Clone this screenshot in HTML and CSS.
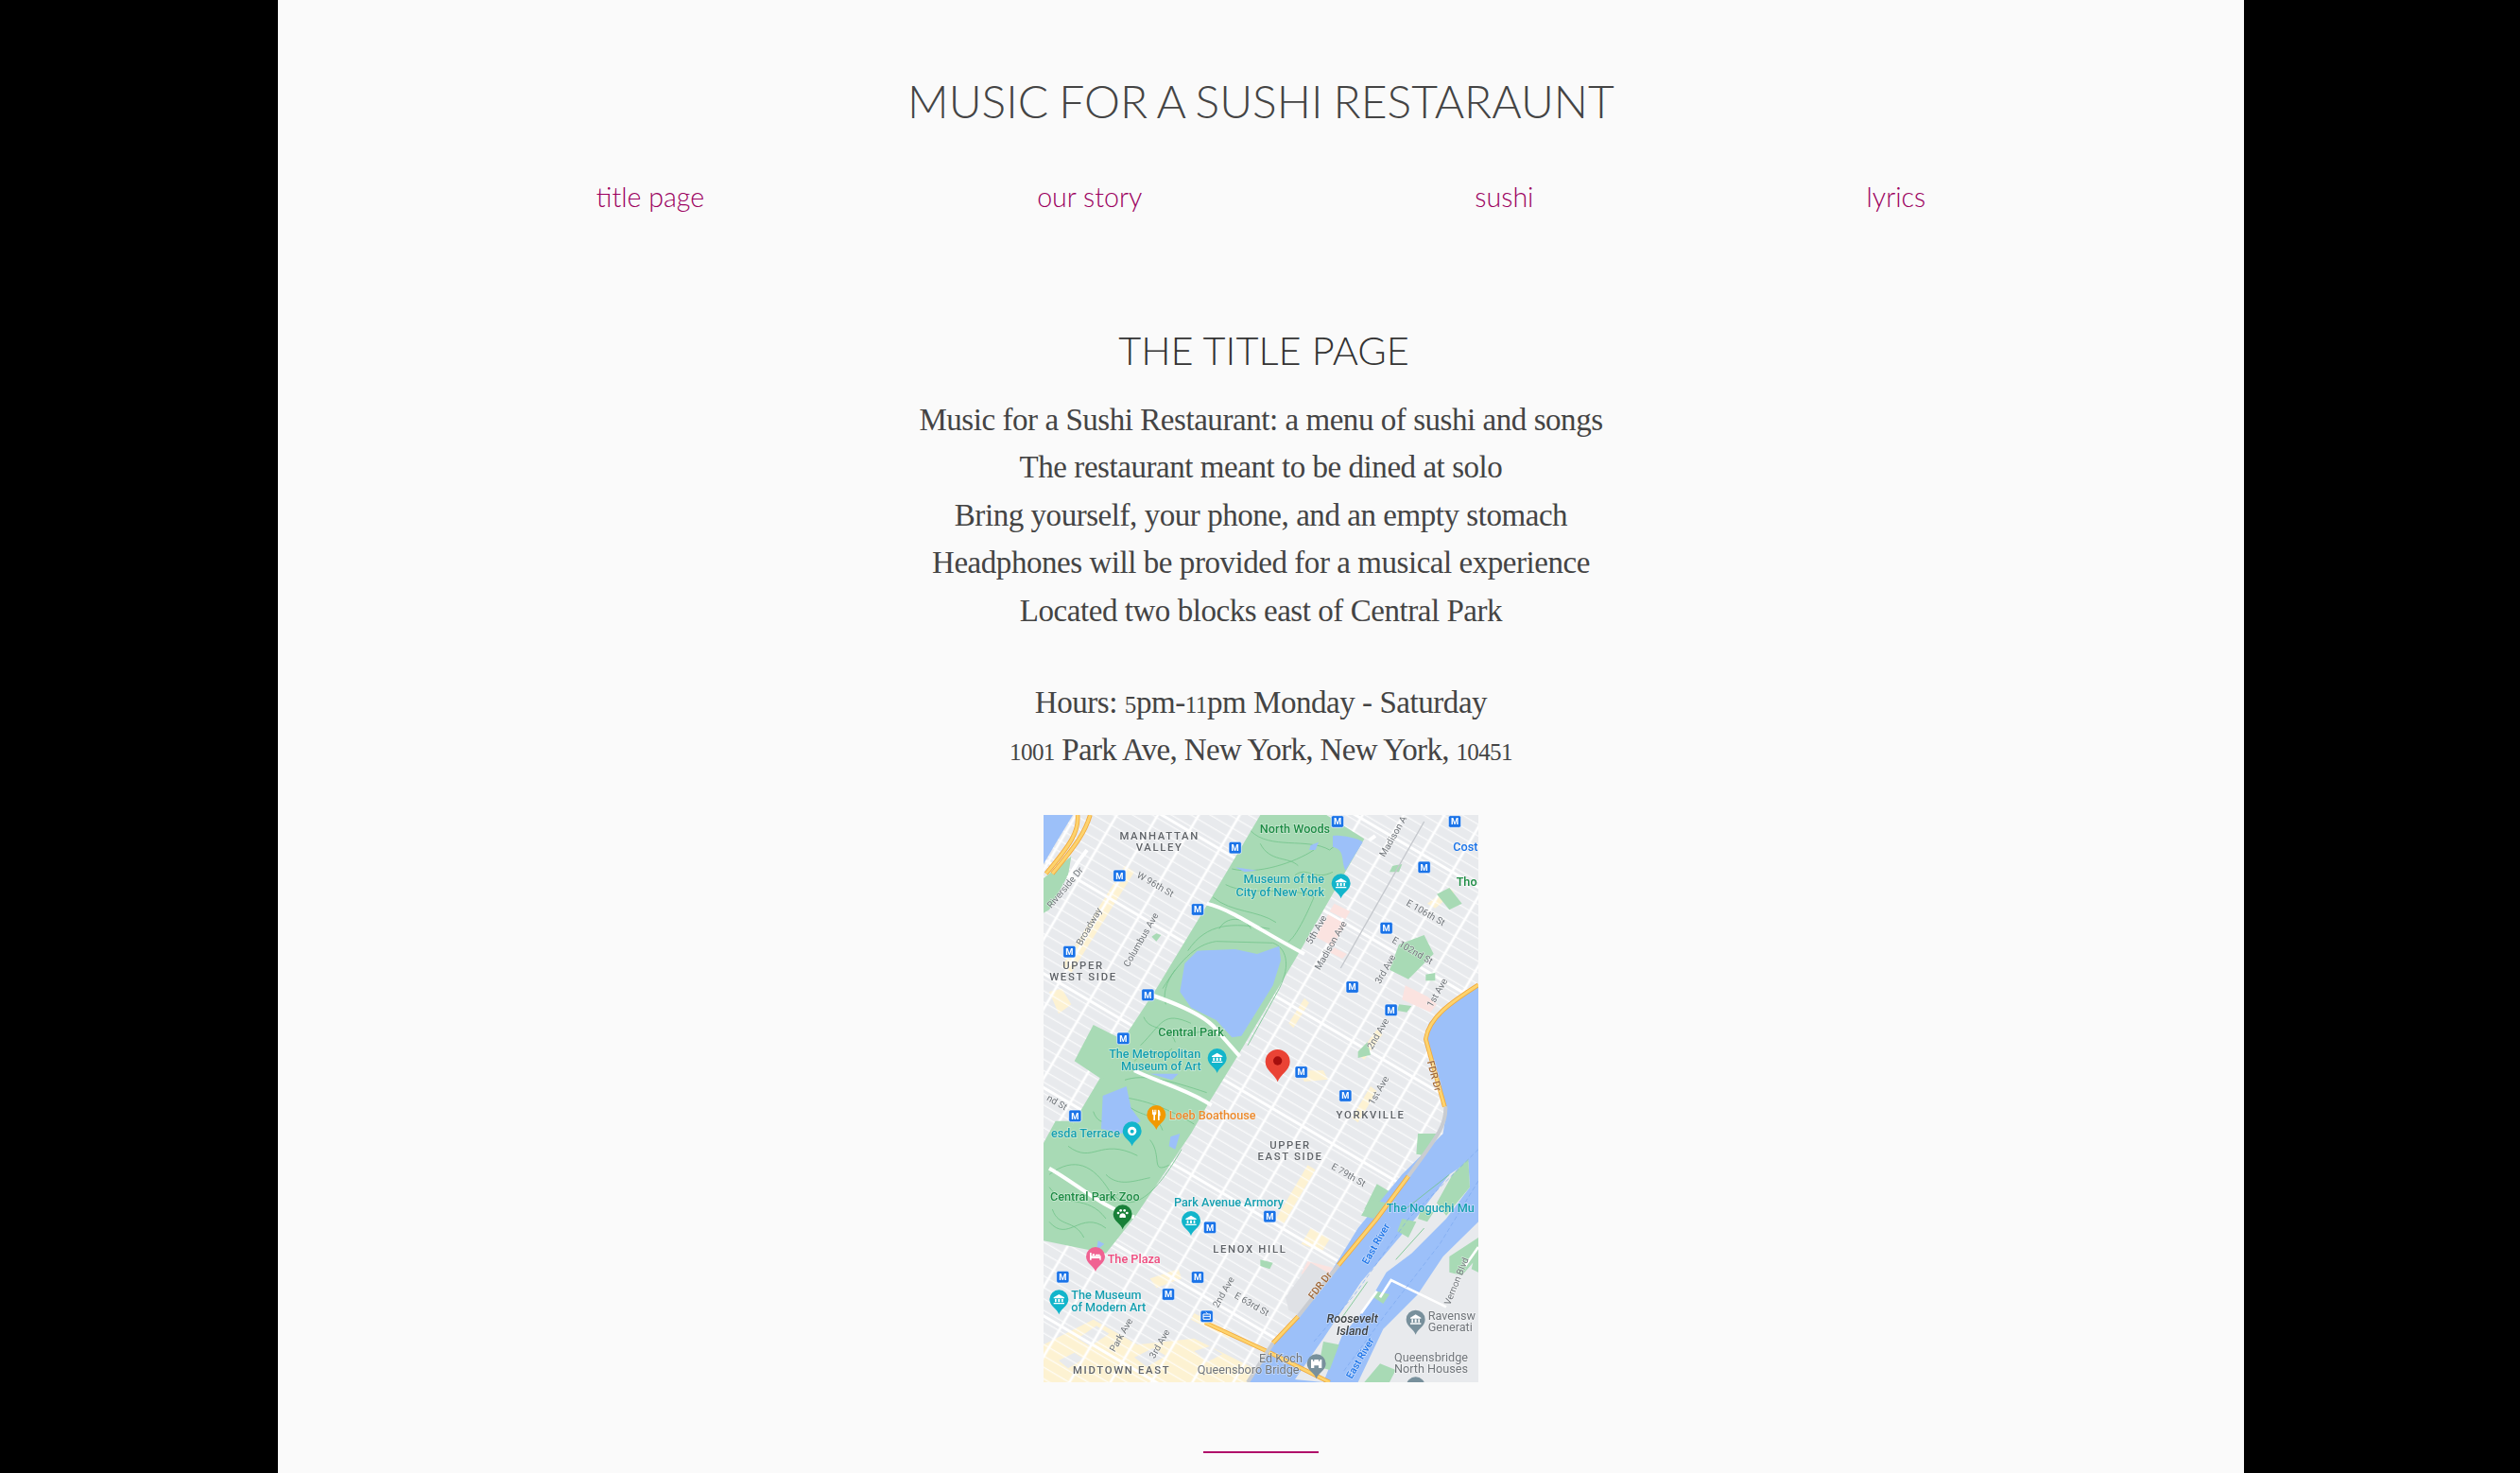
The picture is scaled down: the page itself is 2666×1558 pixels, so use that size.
FILE: index.html
```html
<!DOCTYPE html>
<html lang="en">
<head>
<meta charset="utf-8">
<title>Music for a Sushi Restaurant</title>
<link rel="stylesheet" href="styles.css">
</head>
<body>
<main class="page">
  <header class="masthead">
    <h1 class="site-title">MUSIC FOR A SUSHI RESTARAUNT</h1>
    <nav class="nav">
      <a class="nav-link" href="#">title page</a>
      <a class="nav-link" href="#">our story</a>
      <a class="nav-link" href="#">sushi</a>
      <a class="nav-link" href="#">lyrics</a>
    </nav>
  </header>
  <section class="content">
    <h2 class="section-title">THE TITLE PAGE</h2>
    <div class="copy">
      <p>Music for a Sushi Restaurant: a menu of sushi and songs</p>
      <p>The restaurant meant to be dined at solo</p>
      <p>Bring yourself, your phone, and an empty stomach</p>
      <p>Headphones will be provided for a musical experience</p>
      <p>Located two blocks east of Central Park</p>
    </div>
    <div class="copy copy-hours">
      <p>Hours: <span class="num">5</span>pm-<span class="num">11</span>pm Monday - Saturday</p>
      <p class="address"><span class="num">1001</span> Park Ave, New York, New York, <span class="num">10451</span></p>
    </div>
    <svg class="map" viewBox="42 39 1380 1800" role="img" aria-label="Map of the Upper East Side">
      <defs>
        <pattern id="streets" width="112" height="312" patternUnits="userSpaceOnUse" patternTransform="translate(570 310) rotate(30.5)">
          <path class="st-minor" d="M0 15.600H112M0 46.800H112M0 78H112M0 109.200H112M0 140.400H112M0 171.600H112M0 202.800H112M0 234H112M0 265.200H112M0 296.400H112"/>
          <path class="st-major" d="M0 156H112"/>
          <path class="st-ave" d="M56 0V312"/>
        </pattern>
        <path id="pin" d="M0 48C-5 30-30 22-30 0A30 30 0 0 1 30 0C30 22 5 30 0 48Z"/>
        <g id="museum" class="pin-icon">
          <path d="M-17-6 0-16 17-6V-3H-17Z"/>
          <path d="M-13-1H-8V9H-13ZM-3-1H3V9H-3ZM8-1H13V9H8ZM-17 11H17V15H-17Z"/>
        </g>
        <g id="metro">
          <rect class="m-box" x="-20" y="-19" width="40" height="38" rx="6"/>
          <text class="m-text" x="0" y="10">M</text>
        </g>
      </defs>

      <rect class="land" x="42" y="39" width="1380" height="1800"/>
      <path class="warm" d="M42 1720 200 1640 340 1720 520 1700 700 1790 740 1839H42Z"/>
      <path class="land" d="M150 1700 210 1660 250 1685 190 1725ZM330 1760 390 1730 430 1755 370 1790ZM520 1740 570 1725 610 1750 560 1775ZM90 1770 140 1745 170 1765 120 1795Z"/>
      <path class="warm" d="M100 520 300 200 330 220 130 540ZM60 600 100 590 130 640 90 670ZM780 1320 880 1150 905 1165 805 1335ZM1020 1000 1080 900 1100 915 1040 1015ZM1260 320 1330 270 1345 285 1285 335ZM380 1510 470 1480 480 1510 400 1540ZM520 1620 640 1680 630 1700 510 1640Z"/>
      <path class="warm" d="M820 700 870 620 885 635 835 715ZM1040 800 1100 720 1118 735 1060 815ZM850 850 930 850 945 878 870 885ZM860 1400 890 1350 950 1385 925 1425Z"/>
      <rect class="streets" x="42" y="39" width="1380" height="1800"/>

      <path class="pink" d="M965 320 1015 345 1000 370 950 345ZM945 355 1000 385 960 455 905 425ZM965 460 1005 480 990 495 950 475ZM1190 580 1260 615 1290 640 1270 665 1180 625ZM880 1455 960 1475 970 1520 900 1510 860 1495Z"/>
      <path class="shade" d="M810 1570 890 1460 960 1500 880 1640 820 1610Z"/>

      <path class="park" d="M730 39H940L1060 115 845 490 660 800 565 955 510 1050 335 1310 240 1430 42 1390V1210L140 1010 295 750 400 590 570 310Z"/>
      <path class="park" d="M200 705 300 755 230 880 140 820Z"/>
      <path class="park" d="M42 240 130 170 120 230 60 340 42 350Z"/>
      <path class="park" d="M80 1010 140 1010 60 1200 42 1210V1080Z"/>
      <path class="park" d="M1060 1290 1100 1210 1150 1240 1100 1310ZM1140 1390 1180 1370 1190 1440 1150 1460ZM1150 200 1180 195 1170 220 1140 220ZM1170 450 1250 420 1280 480 1200 560 1140 530ZM1255 545 1285 540 1285 565 1255 565ZM1040 790 1070 760 1080 800 1040 810ZM1170 640 1210 645 1195 665 1165 660ZM1290 290 1330 270 1370 320 1330 340ZM730 1450 770 1460 760 1480 730 1470ZM770 145 800 150 790 160 770 155ZM400 415 415 420 400 440 385 425Z"/>

      <path class="trail" d="M420 590C470 510 520 450 590 440L770 445C810 460 830 510 790 590L690 770M500 470C560 380 640 380 760 400M700 90C760 150 880 110 950 150L1000 110M640 210C720 230 840 190 900 150M620 260C700 300 820 260 900 300 880 350 840 430 820 440M580 300C640 350 720 340 780 380M440 720C500 760 540 700 620 740M350 770C420 700 420 660 510 700M300 880C360 860 440 880 560 920M260 930C350 940 420 960 520 1020M60 1180C140 1120 200 1150 250 1230 320 1320 400 1240 480 1100M120 1090C200 1150 220 1060 340 1120M60 1330C120 1400 160 1290 240 1350M60 1220C110 1290 180 1240 240 1320M460 530C430 570 420 610 430 640M780 500C760 560 740 610 700 690M600 400C620 360 680 360 700 400M730 130C760 190 820 170 850 200M840 230C880 200 900 250 960 220M300 950C340 1000 400 980 420 1040M380 1070C420 1120 380 1180 440 1150M130 1260C170 1220 240 1280 280 1240M240 1180C280 1220 330 1200 380 1190M70 1290C90 1350 140 1320 170 1380M360 680C380 730 440 700 460 760M330 820C370 780 420 810 450 780M200 980C220 1040 280 1010 290 960"/>

      <path class="water" d="M42 39H135L80 130 42 195ZM490 510 530 470 650 465 720 480 790 455 795 500 770 580 720 660 670 740 640 745 590 690 510 650 475 600ZM960 105C985 100 1050 115 1055 125L1000 215C985 180 1000 150 960 140ZM890 135 915 125 905 150 885 150ZM650 205 720 215 680 220ZM230 930 305 900 320 970 350 1010 290 1050 225 1035ZM380 860 470 860 450 880ZM445 1060 475 1050 460 1100 440 1090ZM215 1390 235 1400 210 1420Z"/>
      <path class="water" d="M1422 580 1330 635 1265 700 1250 760 1290 880 1322 970 1310 1050 1180 1180 1040 1350 960 1480 850 1630 760 1730 690 1839H1422Z"/>
      <path class="land" d="M1422 1330 1310 1440 1230 1560 1120 1670 1040 1839H1422Z"/>
      <path class="land" d="M1390 1140 1330 1180 1230 1310 1120 1440 1050 1520 990 1610 930 1700 840 1830 930 1839 990 1690 1060 1610 1130 1490 1210 1430 1320 1320 1395 1220Z"/>
      <path class="park" d="M1390 1130 1395 1220 1320 1310 1290 1270 1340 1180ZM1180 1320 1225 1330 1200 1380 1165 1360ZM1240 1290 1280 1300 1260 1330 1230 1320ZM930 1710 980 1720 950 1800 915 1790ZM1100 1550 1140 1560 1120 1590 1090 1570ZM1330 1440 1422 1380V1440L1370 1500 1330 1490ZM1060 1839 1110 1780 1160 1800 1140 1839ZM1230 1050 1290 1050 1250 1120 1225 1115ZM1080 1260 1130 1270 1090 1320 1050 1310ZM1410 1440 1422 1430 1422 1490 1400 1480Z"/>
      <path class="road" d="M1110 1570 1145 1515 1320 1600M1050 1620 1100 1550M1422 1410 1380 1470"/>
      <path class="trail" d="M1160 1450 1250 1350M1190 1290 1330 1180M985 1640 1070 1520"/>
      <path class="river-line" d="M1422 1100 1200 1320 1030 1560 900 1710M1422 1200 1300 1400 1130 1620 990 1810"/>

      <path class="road-wide" d="M560 320C640 340 720 400 870 480M390 612C470 640 560 680 590 720L665 805M330 850C400 885 500 910 575 960M60 1160C150 1210 220 1280 330 1315"/>
      <path class="road-wide" d="M180 150 150 190 120 240"/>
      <path class="road-casing" d="M150 39C155 90 130 130 50 225M190 39C175 90 150 130 70 225M1422 578C1340 630 1265 680 1255 750L1315 965M1200 1185 1100 1320 978 1468M850 1630 770 1715M555 1650 750 1740 950 1839"/>
      <path class="road-yellow" d="M150 39C155 90 130 130 50 225M190 39C175 90 150 130 70 225M1422 578C1340 630 1265 680 1255 750L1315 965M1200 1185 1100 1320 978 1468M850 1630 770 1715M555 1650 750 1740 950 1839"/>
      <path class="road-grey" d="M1318 965C1320 1020 1300 1050 1200 1185M978 1468 850 1630M770 1715 690 1839"/>
      <path class="road-wide" d="M1075 120 1095 105"/>
      <path class="thin-rail" d="M1250 60 985 525"/>

      <text class="area" x="410" y="117">MANHATTAN</text>
      <text class="area" x="410" y="153">VALLEY</text>
      <text class="area" x="168" y="528">UPPER</text>
      <text class="area" x="168" y="564">WEST SIDE</text>
      <text class="area" x="1080" y="1003">YORKVILLE</text>
      <text class="area" x="825" y="1098">UPPER</text>
      <text class="area" x="825" y="1134">EAST SIDE</text>
      <text class="area" x="697" y="1428">LENOX HILL</text>
      <text class="area" x="290" y="1812">MIDTOWN EAST</text>

      <text class="label green" x="840" y="97">North Woods</text>
      <text class="label green" x="510" y="742">Central Park</text>
      <text class="label green" x="205" y="1262">Central Park Zoo</text>
      <text class="label teal-t" x="805" y="256">Museum of the</text>
      <text class="label teal-t" x="793" y="296">City of New York</text>
      <text class="label teal-t" x="395" y="810">The Metropolitan</text>
      <text class="label teal-t" x="415" y="850">Museum of Art</text>
      <text class="label teal-t end" x="285" y="1062">esda Terrace</text>
      <text class="label teal-t" x="630" y="1282">Park Avenue Armory</text>
      <text class="label teal-t start" x="1130" y="1300">The Noguchi Mu</text>
      <text class="label teal-t start" x="130" y="1575">The Museum</text>
      <text class="label teal-t start" x="130" y="1615">of Modern Art</text>
      <text class="label orange start" x="440" y="1006">Loeb Boathouse</text>
      <text class="label rose start" x="245" y="1460">The Plaza</text>
      <text class="label blue start" x="1342" y="153">Cost</text>
      <text class="label green start" x="1352" y="265">Tho</text>
      <text class="label grey start" x="1262" y="1640">Ravensw</text>
      <text class="label grey start" x="1262" y="1678">Generati</text>
      <text class="label grey start" x="1155" y="1772">Queensbridge</text>
      <text class="label grey start" x="1155" y="1810">North Houses</text>
      <text class="label grey" x="795" y="1775">Ed Koch</text>
      <text class="label grey" x="692" y="1812">Queensboro Bridge</text>
      <text class="island" x="1022" y="1650">Roosevelt</text>
      <text class="island" x="1022" y="1690">Island</text>

      <text class="street" transform="translate(392 268) rotate(30)">W 96th St</text>
      <text class="street" transform="translate(195 398) rotate(-60)">Broadway</text>
      <text class="street" transform="translate(360 440) rotate(-60)">Columbus Ave</text>
      <text class="street" transform="translate(118 276) rotate(-50)">Riverside Dr</text>
      <text class="street" transform="translate(917 408) rotate(-60)">5th Ave</text>
      <text class="street" transform="translate(962 458) rotate(-60)">Madison Ave</text>
      <text class="street" transform="translate(1160 112) rotate(-60)">Madison A</text>
      <text class="street" transform="translate(1250 358) rotate(30)">E 106th St</text>
      <text class="street" transform="translate(1208 478) rotate(30)">E 102nd St</text>
      <text class="street" transform="translate(1135 533) rotate(-60)">3rd Ave</text>
      <text class="street" transform="translate(1300 608) rotate(-60)">1st Ave</text>
      <text class="street" transform="translate(1112 738) rotate(-60)">2nd Ave</text>
      <text class="street" transform="translate(1114 918) rotate(-60)">1st Ave</text>
      <text class="street" transform="translate(80 960) rotate(30)">nd St</text>
      <text class="street" transform="translate(1005 1190) rotate(30)">E 79th St</text>
      <text class="street" transform="translate(622 1558) rotate(-60)">2nd Ave</text>
      <text class="street" transform="translate(698 1600) rotate(30)">E 63rd St</text>
      <text class="street" transform="translate(1362 1522) rotate(-68)">Vernon Blvd</text>
      <text class="street" transform="translate(297 1694) rotate(-60)">Park Ave</text>
      <text class="street" transform="translate(419 1722) rotate(-60)">3rd Ave</text>
      <text class="highway" transform="translate(1272 870) rotate(75)">FDR Dr</text>
      <text class="highway" transform="translate(928 1538) rotate(-52)">FDR Dr</text>
      <text class="river" transform="translate(1106 1405) rotate(-60)">East River</text>
      <text class="river" transform="translate(1056 1768) rotate(-60)">East River</text>

      <use href="#metro" x="975" y="60"/>
      <use href="#metro" x="1347" y="60"/>
      <use href="#metro" x="650" y="143"/>
      <use href="#metro" x="1250" y="205"/>
      <use href="#metro" x="283" y="232"/>
      <use href="#metro" x="531" y="339"/>
      <use href="#metro" x="1130" y="398"/>
      <use href="#metro" x="124" y="473"/>
      <use href="#metro" x="1022" y="585"/>
      <use href="#metro" x="373" y="610"/>
      <use href="#metro" x="1145" y="658"/>
      <use href="#metro" x="295" y="748"/>
      <use href="#metro" x="860" y="855"/>
      <use href="#metro" x="1000" y="930"/>
      <use href="#metro" x="142" y="994"/>
      <use href="#metro" x="103" y="1505"/>
      <use href="#metro" x="531" y="1506"/>
      <use href="#metro" x="438" y="1560"/>
      <use href="#metro" x="570" y="1348"/>
      <use href="#metro" x="760" y="1313"/>
      <g transform="translate(560 1630)">
        <rect class="m-box" x="-20" y="-19" width="40" height="38" rx="6"/>
        <path class="tram" d="M-11-7H11V9H-11ZM-11 0H11M-3-13 3-8"/>
      </g>

      <g transform="translate(986 256)"><use class="p-teal" href="#pin"/><use href="#museum"/></g>
      <g transform="translate(593 810)"><use class="p-teal" href="#pin"/><use href="#museum"/></g>
      <g transform="translate(323 1042)"><use class="p-teal" href="#pin"/><circle class="pin-icon" cx="0" cy="0" r="14"/><circle class="p-teal" cx="0" cy="1" r="6"/></g>
      <g transform="translate(510 1326)"><use class="p-teal" href="#pin"/><use href="#museum"/></g>
      <g transform="translate(91 1576)"><use class="p-teal" href="#pin"/><use href="#museum"/></g>
      <g transform="translate(293 1306)"><use class="p-green" href="#pin"/><path class="pin-icon" d="M-10 8C-10 0-4-3 0-3 4-3 10 0 10 8 10 13 4 10 0 10-4 10-10 13-10 8Z"/><circle class="pin-icon" cx="-14" cy="-4" r="4"/><circle class="pin-icon" cx="-6" cy="-12" r="4"/><circle class="pin-icon" cx="6" cy="-12" r="4"/><circle class="pin-icon" cx="14" cy="-4" r="4"/></g>
      <g transform="translate(207 1440)"><use class="p-rose" href="#pin"/><path class="pin-icon" d="M-18-12H-13V-2H17V11H13V6H-13V11H-18ZM-10-8H-3V-3H-10ZM0-7H14V-3H0Z"/></g>
      <g transform="translate(400 990)"><use class="p-orange" href="#pin"/><path class="pin-icon" d="M-13-16H-10V-8H-8V-16H-5V-8H-3V-16H0V-4C0 0-3 1-4 1V18H-9V1C-10 1-13 0-13-4ZM5-16C12-16 13-6 13 4H10V18H5Z"/></g>
      <g transform="translate(908 1780)"><use class="p-slate" href="#pin"/><path class="pin-icon" d="M-17-13H-11V-8H-7V-13H7V-8H11V-13H17V14H7V6H-7V14H-17Z"/></g>
      <g transform="translate(1223 1640)"><use class="p-slate" href="#pin"/><use href="#museum"/></g>
      <g transform="translate(1223 1852)"><use class="p-slate" href="#pin"/></g>

      <g transform="translate(785 822)">
        <path class="pin-red" d="M0 64C-8 40-39 28-39 0A39 39 0 0 1 39 0C39 28 8 40 0 64Z"/>
        <circle class="pin-red-dot" cx="0" cy="-3" r="14"/>
      </g>
    </svg>
    <hr class="rule">
  </section>
</main>
</body>
</html>
```

FILE: styles.css
```css
* { box-sizing: border-box; }

html, body {
  margin: 0;
  height: 100%;
  background: #000;
  overflow: hidden;
}

.page {
  width: 2080px;
  height: 1558px;
  margin: 0 0 0 294px;
  background: #fafafa;
  overflow: hidden;
  font-family: "Lato", "Liberation Sans", sans-serif;
}

.masthead {
  padding-top: 73px;
}

.site-title {
  margin: 0;
  font-size: 48px;
  line-height: 68px;
  font-weight: 300;
  word-spacing: -2px;
  text-align: center;
  color: #444;
}

.nav {
  display: flex;
  justify-content: center;
  gap: 352px;
  margin-top: 47px;
}

.nav-link {
  font-size: 28.6px;
  line-height: 40px;
  font-weight: 300;
  color: #9c0060;
  text-decoration: none;
}

.content {
  display: flex;
  flex-direction: column;
  align-items: center;
  padding-top: 113px;
}

.section-title {
  margin: 0 0 0 6px;
  font-size: 41.5px;
  line-height: 58px;
  font-weight: 300;
  color: #333;
}

.copy {
  margin-top: 20px;
  font-family: "Liberation Serif", serif;
  font-size: 33px;
  line-height: 50.4px;
  letter-spacing: -0.45px;
  color: #444;
  text-align: center;
}

.copy p { margin: 0; }

.copy .address { letter-spacing: -0.65px; }

.num {
  font-size: 0.76em;
  line-height: 1;
}

.copy-hours { margin-top: 47px; }

.map {
  display: block;
  width: 460px;
  height: 600px;
  margin-top: 43px;
  filter: blur(0.45px);
}

.rule {
  width: 122px;
  height: 2px;
  margin: 73px 0 0;
  border: 0;
  background: #b0106a;
}

/* map surfaces */
.land { fill: #e8eaed; }
.warm { fill: #fdf2d2; }
.streets { fill: url(#streets); }
.st-minor { fill: none; stroke: #fff; stroke-width: 3.5; }
.st-major { fill: none; stroke: #fff; stroke-width: 9; }
.st-ave { fill: none; stroke: #fff; stroke-width: 8; }
.pink { fill: #fbe3e0; }
.shade { fill: #dfe1e5; }
.park { fill: #a8dab5; }
.trail { fill: none; stroke: #74c48c; stroke-width: 2.5; }
.water { fill: #9cc0f9; }
.road { fill: none; stroke: #fff; stroke-width: 8; }
.river-line { fill: none; stroke: #7aa7f0; stroke-width: 2; stroke-dasharray: 14 8; }
.road-wide { fill: none; stroke: #fff; stroke-width: 12; }
.road-casing { fill: none; stroke: #f2a93b; stroke-width: 14; }
.road-yellow { fill: none; stroke: #fdd36e; stroke-width: 9; }
.road-grey { fill: none; stroke: #c9ccd1; stroke-width: 12; }
.thin-rail { fill: none; stroke: #c4c7cc; stroke-width: 4; }

/* map text */
.area, .label, .island, .street, .highway, .river {
  font-family: "Roboto", "Liberation Sans", sans-serif;
  text-anchor: middle;
  paint-order: stroke;
  stroke: rgba(255, 255, 255, 0.45);
  stroke-width: 4px;
}
.area {
  font-size: 34px;
  font-weight: 500;
  letter-spacing: 5px;
  fill: #5f6368;
}
.label {
  font-size: 38px;
  font-weight: 500;
}
.label.start { text-anchor: start; }
.label.end { text-anchor: end; }
.green { fill: #1e8c45; }
.teal-t { fill: #159fb0; }
.orange { fill: #ec8a2c; }
.rose { fill: #ee4b7e; }
.blue { fill: #1a73e8; }
.grey { fill: #70757a; font-weight: 400; }
.island {
  font-size: 38px;
  font-weight: 500;
  font-style: italic;
  fill: #3c4043;
}
.street { font-size: 30px; fill: #70757a; }
.highway { font-size: 32px; font-weight: 500; fill: #a0693a; }
.river { font-size: 32px; font-weight: 500; fill: #1a73e8; }

/* map markers */
.m-box { fill: #1a73e8; stroke: #fff; stroke-width: 2; }
.m-text {
  font-family: "Roboto", "Liberation Sans", sans-serif;
  font-size: 28px;
  font-weight: 700;
  fill: #fff;
  text-anchor: middle;
}
.tram { fill: none; stroke: #fff; stroke-width: 3; }
.pin-icon { fill: #fff; }
.p-teal { fill: #12b5cb; }
.p-green { fill: #188038; }
.p-rose { fill: #f06292; }
.p-orange { fill: #f29900; }
.p-slate { fill: #78909c; }
.pin-red { fill: #ea4335; }
.pin-red-dot { fill: #a50e0e; }
```
